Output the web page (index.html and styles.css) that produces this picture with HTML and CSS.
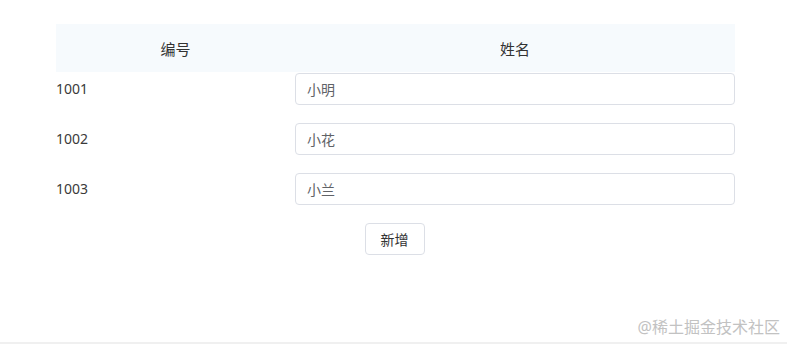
FILE: index.html
```html
<!DOCTYPE html>
<html lang="zh-CN">
<head>
  <meta charset="UTF-8">
  <title>表格编辑</title>
  <link rel="stylesheet" href="styles.css">
</head>
<body>
  <div class="page">
    <div class="table">
      <div class="row head">
        <div class="cell id">编号</div>
        <div class="cell name">姓名</div>
      </div>
      <div class="row">
        <div class="cell id">1001</div>
        <div class="cell name"><input type="text" value="小明"></div>
      </div>
      <div class="row">
        <div class="cell id">1002</div>
        <div class="cell name"><input type="text" value="小花"></div>
      </div>
      <div class="row">
        <div class="cell id">1003</div>
        <div class="cell name"><input type="text" value="小兰"></div>
      </div>
      <div class="actions">
        <button type="button">新增</button>
      </div>
    </div>
    <div class="watermark">@稀土掘金技术社区</div>
  </div>
</body>
</html>
```

FILE: styles.css
```css
* {
  margin: 0;
  padding: 0;
  box-sizing: border-box;
}

body {
  font-family: "Noto Sans", "Noto Sans CJK SC", sans-serif;
  color: #333;
  background: #fff;
}

.page {
  position: relative;
  height: 344px;
  padding: 24px 0 0 56px;
  border-bottom: 2px solid #f0f0f0;
}

.table {
  width: 679px;
}

.row {
  display: flex;
  align-items: center;
  height: 50px;
  padding-top: 1px;
  font-size: 14px;
}

.row.head {
  height: 48px;
  padding-top: 0;
  background: #f6fafd;
  font-size: 15px;
}

.cell.id {
  width: 239px;
}

.cell.name {
  flex: 1;
}

.head .cell {
  text-align: center;
}

.row:not(.head) {
  align-items: flex-start;
}

.row:not(.head) .cell.id {
  line-height: 32px;
  color: #3a3a3a;
}

input {
  display: block;
  width: 100%;
  height: 32px;
  padding: 0 11px;
  border: 1px solid #dcdfe6;
  border-radius: 4px;
  font-family: inherit;
  font-size: 14px;
  color: #606266;
  outline: none;
}

.actions {
  display: flex;
  justify-content: center;
  padding: 1px 2px 0 0;
}

button {
  width: 60px;
  height: 32px;
  background: #fff;
  border: 1px solid #dcdfe6;
  border-radius: 4px;
  font-family: inherit;
  font-size: 14px;
  color: #333;
  cursor: pointer;
}

.watermark {
  position: absolute;
  right: 7px;
  bottom: 4px;
  font-size: 16px;
  color: #c2c2c2;
}
```
